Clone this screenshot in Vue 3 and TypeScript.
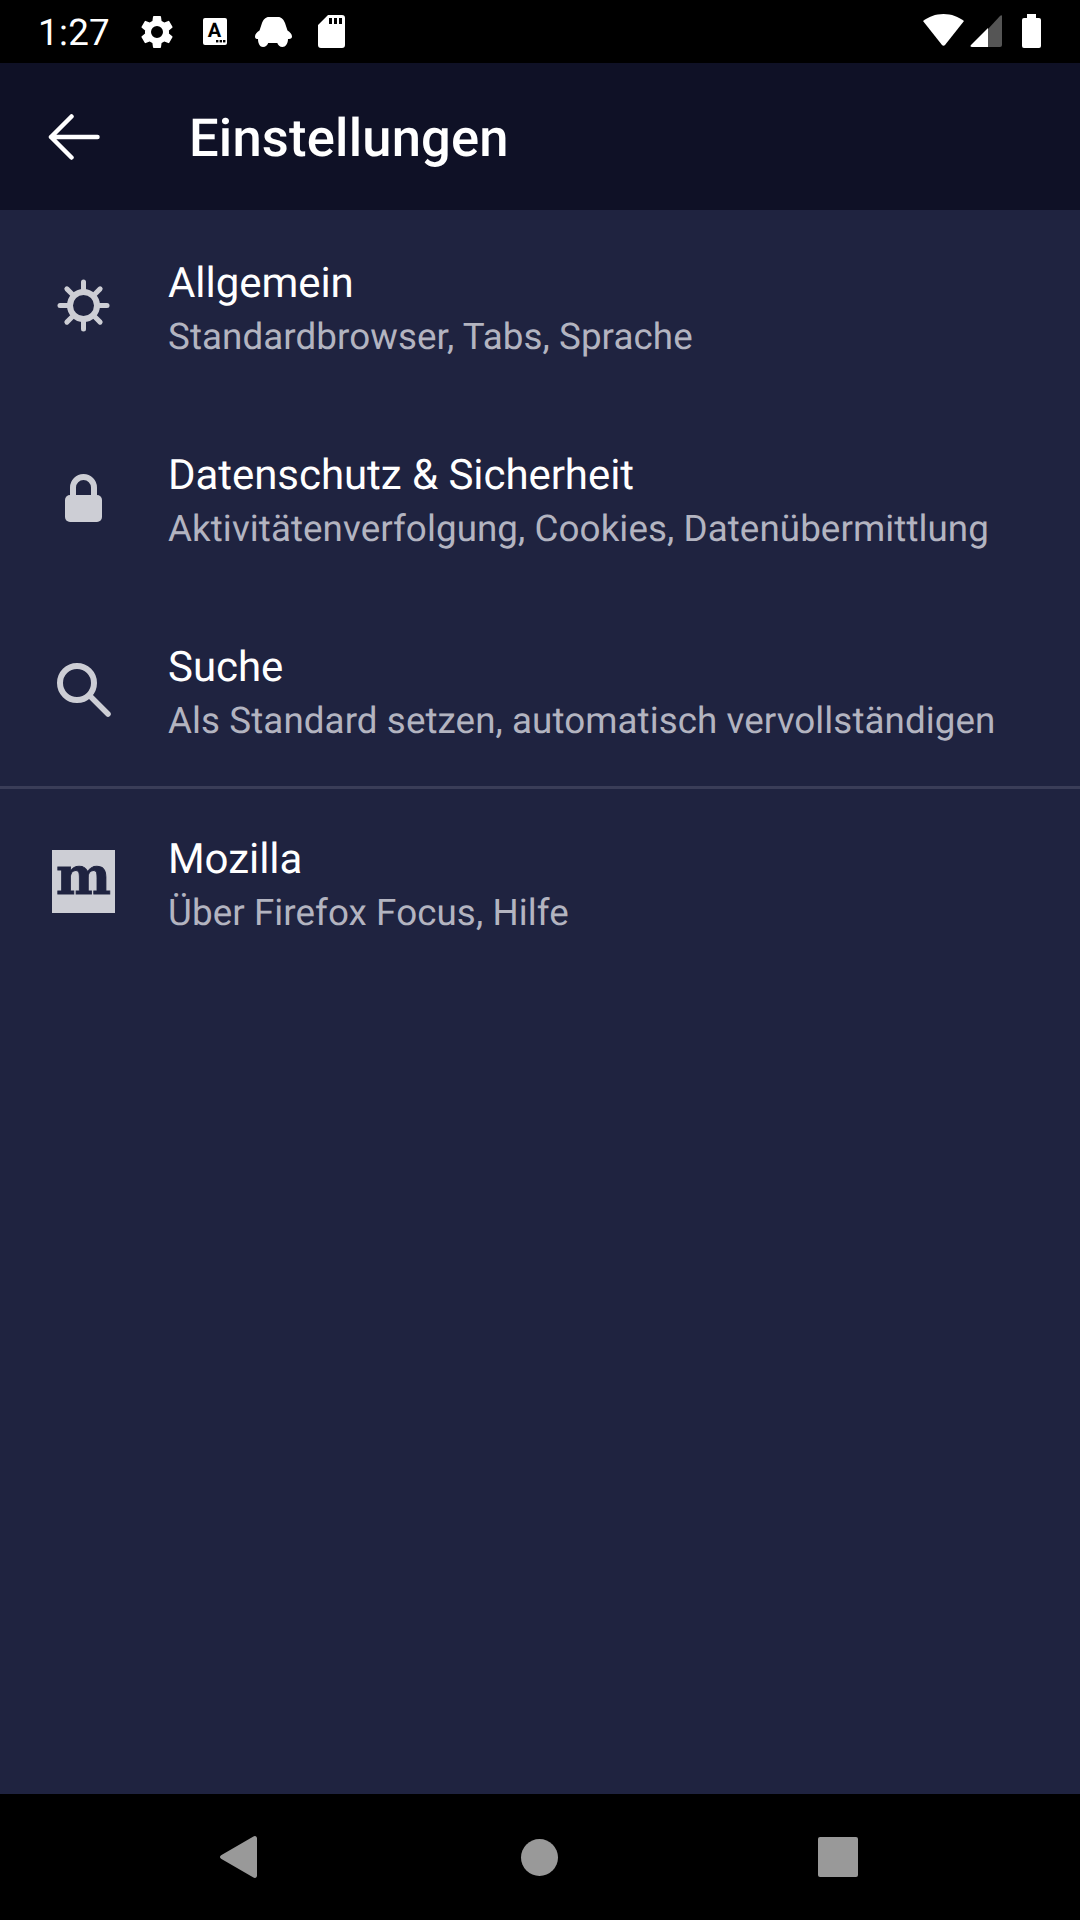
<script setup lang="ts">
interface Item {
  key: string
  title: string
  sub: string
}
const items: Item[] = [
  { key: 'sun', title: 'Allgemein', sub: 'Standardbrowser, Tabs, Sprache' },
  { key: 'lock', title: 'Datenschutz & Sicherheit', sub: 'Aktivitätenverfolgung, Cookies, Datenübermittlung' },
  { key: 'search', title: 'Suche', sub: 'Als Standard setzen, automatisch vervollständigen' },
  { key: 'moz', title: 'Mozilla', sub: 'Über Firefox Focus, Hilfe' },
]
const rays = [0, 45, 90, 135, 180, 225, 270, 315]
</script>

<template>
  <div class="page">
    <header class="status">
      <span class="time">1:27</span>
      <svg class="s-gear" width="40" height="40" viewBox="0 0 24 24"><path fill="#fff" d="M19.14 12.94c.04-.3.06-.61.06-.94 0-.32-.02-.64-.07-.94l2.03-1.58a.49.49 0 0 0 .12-.61l-1.92-3.32a.49.49 0 0 0-.59-.22l-2.39.96c-.5-.38-1.03-.7-1.62-.94l-.36-2.54a.48.48 0 0 0-.48-.41h-3.84c-.24 0-.43.17-.47.41l-.36 2.54c-.59.24-1.13.57-1.62.94l-2.39-.96a.48.48 0 0 0-.59.22L2.74 8.87c-.12.21-.08.47.12.61l2.03 1.58c-.05.3-.09.63-.09.94s.02.64.07.94l-2.03 1.58a.49.49 0 0 0-.12.61l1.92 3.32c.12.22.37.29.59.22l2.39-.96c.5.38 1.03.7 1.62.94l.36 2.54c.05.24.24.41.48.41h3.84c.24 0 .44-.17.47-.41l.36-2.54c.59-.24 1.13-.56 1.62-.94l2.39.96c.22.08.47 0 .59-.22l1.92-3.32c.12-.22.07-.47-.12-.61l-2.01-1.58zM12 15.6A3.6 3.6 0 1 1 12 8.4a3.6 3.6 0 0 1 0 7.2z"/></svg>
      <svg class="s-a" width="24" height="27" viewBox="0 0 24 27">
        <rect width="24" height="27" rx="2" fill="#fff"/>
        <text x="11.5" y="19" text-anchor="middle" class="a-glyph">A</text>
        <rect x="13" y="22" width="2.4" height="2.4" fill="#000"/>
        <rect x="16.6" y="22" width="2.4" height="2.4" fill="#000"/>
        <rect x="20" y="22" width="2.4" height="2.4" fill="#000"/>
      </svg>
      <svg class="s-car" width="37" height="30" viewBox="0 0 37 30"><path fill="#fff" d="M14 0h9c3.500 0 5.500 2.500 7 6l2.500 7.500c2.500 1.500 4.500 3.500 4.500 6 0 1.500-1 2.500-3 2.500h-1c0 4.500-2.500 8-5.500 8-2.700 0-4.500-2-5.200-4H13.200c-.7 2-2.500 4-5.200 4-3 0-5-3.500-5-8H2c-1.300 0-2-1-2-2.500 0-2.500 2-4.500 4.500-6L7 6c1.500-3.500 3.500-6 7-6z"/></svg>
      <svg class="s-sd" width="27" height="33" viewBox="0 0 27 33"><path fill="#fff" fill-rule="evenodd" d="M10 0h14a3 3 0 0 1 3 3v27a3 3 0 0 1-3 3H3a3 3 0 0 1-3-3V10zM11 3v6h3V3zM16 3v6h3V3zM21 3v6h3V3z"/></svg>
      <span class="spacer"></span>
      <svg class="s-wifi" width="41" height="32" viewBox="0 0 41 32"><path fill="#fff" d="M20.5 0C28.5 0 35.5 2.800 41 7L22 31c-.8 1-2.200 1-3 0L0 7C5.500 2.800 12.500 0 20.500 0z"/></svg>
      <svg class="s-cell" width="32" height="32" viewBox="0 0 32 32">
        <path fill="#555" d="M32 1v29a2 2 0 0 1-2 2H18V14L30 1c1-1 2-.8 2 0z"/>
        <path fill="#fff" d="M18 13v19H2c-1.500 0-2-1-1-2z"/>
      </svg>
      <svg class="s-bat" width="19" height="34" viewBox="0 0 19 34"><path fill="#fff" d="M5 0h9v4h3a2 2 0 0 1 2 2v26a2 2 0 0 1-2 2H2a2 2 0 0 1-2-2V6a2 2 0 0 1 2-2h3z"/></svg>
    </header>

    <div class="toolbar">
      <svg class="back" width="52" height="46" viewBox="0 0 52 46">
        <path d="M49.500 23H3M23.500 2.500 3 23l20.500 20.500" fill="none" stroke="#fff" stroke-width="4.500" stroke-linecap="round" stroke-linejoin="round"/>
      </svg>
      <h1 class="heading">Einstellungen</h1>
    </div>

    <main class="list">
      <div v-for="item in items" :key="item.key" class="row" :class="{ divided: item.key === 'moz' }">
        <div class="icon">
          <svg v-if="item.key === 'sun'" width="63" height="63" viewBox="0 0 63 63">
            <circle cx="31.500" cy="31.500" r="13.500" fill="none" stroke="#cdced5" stroke-width="6"/>
            <line v-for="r in rays" :key="r" x1="31.500" y1="17" x2="31.500" y2="8" stroke="#cdced5" stroke-width="5" stroke-linecap="round" :transform="`rotate(${r} 31.500 31.500)`"/>
          </svg>
          <svg v-else-if="item.key === 'lock'" width="63" height="63" viewBox="0 0 63 63">
            <path d="M21 31V21.500a10.500 10.500 0 0 1 21 0V31" fill="none" stroke="#cdced5" stroke-width="6"/>
            <rect x="13" y="29" width="37" height="27" rx="5" fill="#cdced5"/>
          </svg>
          <svg v-else-if="item.key === 'search'" width="63" height="63" viewBox="0 0 63 63">
            <circle cx="25" cy="25" r="17" fill="none" stroke="#cdced5" stroke-width="6"/>
            <line x1="38" y1="38" x2="56" y2="56" stroke="#cdced5" stroke-width="5.500" stroke-linecap="round"/>
          </svg>
          <div v-else class="moz">m</div>
        </div>
        <div class="texts">
          <div class="title">{{ item.title }}</div>
          <div class="sub">{{ item.sub }}</div>
        </div>
      </div>
    </main>

    <footer class="nav">
      <svg class="n-back" width="38" height="42" viewBox="-1 0 38 42"><path fill="#999" d="M33 .8c2-1.600 4-.6 4 1.700v37c0 2.300-2 3.300-4 1.700L1.500 23c-2-1-2-3 0-4z"/></svg>
      <span class="n-home"></span>
      <span class="n-recent"></span>
    </footer>
  </div>
</template>

<style scoped>
.page {
  width: 1080px;
  height: 1920px;
  display: flex;
  flex-direction: column;
  background: #1f2340;
  font-family: Roboto, "Liberation Sans", sans-serif;
  text-rendering: geometricPrecision;
  overflow: hidden;
}
.status {
  height: 63px;
  flex: none;
  background: #000;
  display: flex;
  align-items: flex-start;
  padding-left: 38px;
  padding-right: 39px;
  box-sizing: border-box;
  color: #fff;
}
.time {
  font-size: 36.750px;
  line-height: 65px;
  width: 71px;
  letter-spacing: 0.3px;
}
.s-gear { margin: 12px 0 0 28px; }
.s-a { margin: 18px 0 0 26px; }
.a-glyph { font: 700 20px Roboto, sans-serif; fill: #000; }
.s-car { margin: 17px 0 0 28px; }
.s-sd { margin: 15px 0 0 26px; }
.spacer { flex: 1; }
.s-wifi { margin-top: 14px; }
.s-cell { margin: 15px 0 0 6px; }
.s-bat { margin: 14px 0 0 20px; }
.toolbar {
  height: 147px;
  flex: none;
  background: #0f1126;
  display: flex;
  align-items: center;
  padding-left: 48px;
  box-sizing: border-box;
}
.heading {
  margin: 2px 0 0 89px;
  font-size: 52.500px;
  font-weight: 500;
  color: #fff;
  line-height: 62px;
  letter-spacing: 0.2px;
}
.list {
  flex: 1;
  display: flex;
  flex-direction: column;
}
.row {
  height: 192px;
  flex: none;
  display: flex;
  align-items: center;
  padding-left: 52px;
  box-sizing: border-box;
}
.divided { box-shadow: inset 0 3px 0 #3a3d58; }
.icon {
  width: 63px;
  height: 63px;
  flex: none;
  margin-top: -1px;
}
.icon svg { display: block; }
.moz {
  width: 63px;
  height: 63px;
  background: #cdced5;
  color: #1f2340;
  font: 700 52px/54px "DejaVu Serif", serif;
  -webkit-text-stroke: 0.8px #1f2340;
  text-align: center;
}
.texts { margin-left: 53px; padding-top: 7px; margin-top: 1px; }
.title {
  font-size: 42px;
  line-height: 54px;
  color: #fff;
  letter-spacing: -0.05px;
}
.sub {
  font-size: 36.750px;
  line-height: 52px;
  color: #b3b4c0;
  letter-spacing: 0.08px;
}
.nav {
  height: 126px;
  flex: none;
  background: #000;
  display: flex;
  align-items: center;
  padding-left: 219px;
}
.n-home {
  width: 37px;
  height: 37px;
  border-radius: 50%;
  background: #999;
  margin-left: 264px;
}
.n-recent {
  width: 40px;
  height: 40px;
  border-radius: 2px;
  background: #999;
  margin-left: 260px;
}
</style>
